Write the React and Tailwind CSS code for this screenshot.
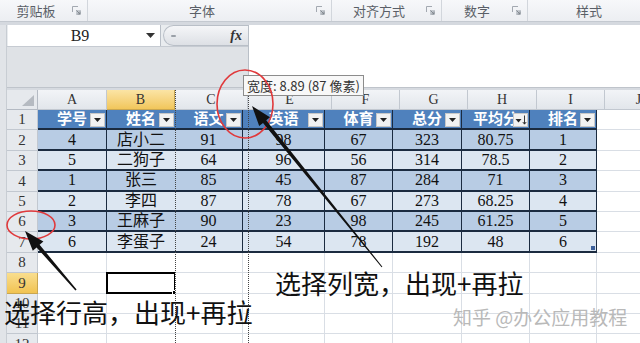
import React from "react";

const HEAD_COLS = [
  { key: "A", w: "w-[69px]" },
  { key: "B", w: "w-[68px]", on: true },
  { key: "C", w: "w-[73px]" },
  { key: "E", w: "w-[84px]" },
  { key: "F", w: "w-[68px]" },
  { key: "G", w: "w-[68px]" },
  { key: "H", w: "w-[69px]" },
  { key: "I", w: "w-[68px]" },
  { key: "J", w: "w-[68px]" },
];

// body columns sit a few px off the header row in the capture
const BODY_W = ["w-[69px]", "w-[68px]", "w-[68px]", "w-[82px]", "w-[68px]", "w-[69px]", "w-[68px]", "w-[67px]", "w-[68px]"];

const DATA = [
  ["学号", "姓名", "语文", "英语", "体育", "总分", "平均分", "排名"],
  ["4", "店小二", "91", "98", "67", "323", "80.75", "1"],
  ["5", "二狗子", "64", "96", "56", "314", "78.5", "2"],
  ["1", "张三", "85", "45", "87", "284", "71", "3"],
  ["2", "李四", "87", "78", "67", "273", "68.25", "4"],
  ["3", "王麻子", "90", "23", "98", "245", "61.25", "5"],
  ["6", "李蛋子", "24", "54", "78", "192", "48", "6"],
];

function Launcher() {
  return (
    <svg width="9" height="9" viewBox="0 0 9 9">
      <path d="M0.5 6V0.5H6" fill="none" stroke="#a3a9b1" />
      <rect x="4" y="4" width="5" height="5" fill="#c3c8ce" />
      <path d="M4.5 4.5L8 8M8 5.5V8H5.5" fill="none" stroke="#7d838b" strokeWidth="0.9" />
    </svg>
  );
}

function Group({ w, label, launcher }) {
  return (
    <div className={`${w} shrink-0 flex items-center border-r border-[#d2d6dc] pr-[6px]`}>
      <span className="flex-1 text-center">{label}</span>
      {launcher && <Launcher />}
    </div>
  );
}

function FilterBtn({ sorted }) {
  return (
    <span className="absolute right-[1px] top-[3px] w-[15px] h-[14px] bg-[#f2f2f2] border border-[#c8c8c8] flex items-center justify-center">
      {sorted ? (
        <svg width="12" height="10" viewBox="0 0 12 10">
          <path d="M0.5 4h6L3.5 7.5z" fill="#222" />
          <path d="M9.5 0.5V9M7.8 7l1.7 2.2L11.2 7" fill="none" stroke="#222" strokeWidth="0.9" />
        </svg>
      ) : (
        <svg width="7" height="4" viewBox="0 0 7 4">
          <path d="M0 0h7L3.5 4z" fill="#222" />
        </svg>
      )}
    </span>
  );
}

function Cell({ n, i, w }) {
  const inTable = n <= 7 && i < 8;
  const rightLine = i === 1 ? "" : "border-r";

  if (inTable && n === 1) {
    return (
      <div className={`${w} shrink-0 relative flex items-center justify-center bg-[#4f81bd] border-b-2 ${rightLine} border-[#1b2b40] text-white font-bold text-[15px]`}>
        <span>{DATA[0][i]}</span>
        <FilterBtn sorted={i === 6} />
      </div>
    );
  }

  if (inTable) {
    const band = n % 2 === 0 ? "bg-[#b8cce4]" : "bg-[#dce6f1]";
    return (
      <div className={`${w} shrink-0 relative flex items-center justify-center ${band} border-b-2 ${rightLine} border-[#1b2b40] text-[16px] text-[#111]`}>
        {DATA[n - 1][i]}
        {n === 7 && i === 7 && <span className="absolute right-[1px] bottom-[1px] w-[4px] h-[4px] bg-[#3c5f9a]" />}
      </div>
    );
  }

  return (
    <div className={`${w} shrink-0 relative border-b ${rightLine} border-[#d9dee5] bg-white`}>
      {n === 9 && i === 1 && (
        <>
          <span className="absolute -left-px -top-px -right-px -bottom-px border-2 border-black" />
          <span className="absolute -right-[3px] -bottom-[3px] w-[6px] h-[6px] bg-black border border-white" />
        </>
      )}
    </div>
  );
}

function RowHead({ n }) {
  const sel = n === 9;
  return (
    <div
      className={`w-[31px] shrink-0 flex items-center justify-center border-r border-b text-[15px] text-[#333] ${
        sel ? "bg-gradient-to-b from-[#f9de8e] to-[#f1c350] border-[#c9a650]" : "bg-[#e6e9ed] border-[#c2c8d0]"
      }`}
    >
      {n}
    </div>
  );
}

function App() {
  const rows = [1, 2, 3, 4, 5, 6, 7, 8, 9, 10, 11, 12];

  return (
    <div className="relative w-[640px] h-[343px] overflow-hidden bg-white font-['Noto_Sans_CJK_SC',sans-serif]">
      {/* Ribbon group labels */}
      <div className="flex h-[22px] bg-gradient-to-b from-[#f7f8fa] to-[#eceef2] border-b border-[#c4c9d0] text-[13px] text-[#5a5f67]">
        <Group w="w-[88px]" label="剪贴板" launcher />
        <Group w="w-[244px]" label="字体" launcher />
        <Group w="w-[110px]" label="对齐方式" launcher />
        <Group w="w-[86px]" label="数字" launcher />
        <div className="flex-1 flex items-center justify-center pl-[10px]">样式</div>
      </div>
      <div className="h-[3px] bg-[#d5d9df]" />

      <div className="flex">
        <div className="w-[7px] shrink-0 bg-[#e1e4e8] border-r border-[#c8cdd3]" />

        <div className="flex-1 flex flex-col min-w-0 font-['Liberation_Serif','Noto_Sans_CJK_SC',serif]">
          {/* Formula bar, expanded */}
          <div className="flex h-[62px] shrink-0">
            <div className="w-[241px] shrink-0 flex flex-col bg-[#dfe2e6]">
              <div className="flex h-[21px] items-center bg-[#e9ecef]">
                <div className="w-[153px] h-[21px] ml-px bg-white border-r border-[#b9bfc7] flex items-center">
                  <span className="flex-1 text-center text-[16px] text-[#222] pl-[6px]">B9</span>
                  <svg width="9" height="5" viewBox="0 0 9 5" className="mr-[5px]">
                    <path d="M0 0h9L4.5 5z" fill="#333" />
                  </svg>
                </div>
                <div className="flex-1 h-[21px] ml-[2px] rounded-l-full border border-r-0 border-[#b9bfc7] bg-gradient-to-b from-[#f5f6f8] to-[#dde0e5] flex items-center">
                  <span className="ml-[7px] w-[5px] h-[2px] bg-[#9aa0a8] rounded-full" />
                  <span className="ml-auto mr-[6px] text-[14px] italic font-bold text-[#333]">fx</span>
                </div>
              </div>
              <div className="flex-1 border-t border-[#c6cbd2]" />
            </div>
            <div className="flex-1 bg-white border-l border-[#b9bfc7]" />
          </div>
          <div className="h-[3px] shrink-0 bg-[#d6dae0] border-t border-[#bfc4cb]" />

          {/* Column headers */}
          <div className="flex h-[20px] shrink-0">
            <div className="w-[31px] shrink-0 bg-[#e6e9ed] border-r border-b border-[#b4bac3] flex items-end justify-end p-[3px]">
              <svg width="12" height="11" viewBox="0 0 12 11">
                <path d="M12 0V11H0z" fill="#b5bac1" />
              </svg>
            </div>
            {HEAD_COLS.map((c) => (
              <div
                key={c.key}
                className={`${c.w} shrink-0 flex items-center justify-center border-r border-b text-[14px] text-[#333] ${
                  c.on ? "bg-gradient-to-b from-[#fbe4a4] to-[#f1c65a] border-[#c9a650]" : "bg-gradient-to-b from-[#f2f4f7] to-[#e2e6eb] border-[#c2c8d0]"
                }`}
              >
                {c.key}
              </div>
            ))}
          </div>

          {/* Rows */}
          {rows.map((n) => (
            <div key={n} className="flex h-[20.4px] shrink-0">
              <RowHead n={n} />
              {BODY_W.map((w, i) => (
                <Cell key={i} n={n} i={i} w={w} />
              ))}
            </div>
          ))}
        </div>
      </div>

      {/* Column resize guides */}
      <div className="absolute left-[175px] top-[90px] bottom-0 border-l border-dotted border-[#444]" />
      <div className="absolute left-[248px] top-[90px] bottom-0 border-l border-dotted border-[#444]" />

      {/* Width tooltip */}
      <div className="absolute left-[243px] top-[75px] h-[21px] px-[3px] flex items-center bg-[#f8f8f8] border border-[#8c8c8c] text-[13px] text-[#333] whitespace-nowrap">
        宽度: 8.89 (87 像素)
      </div>

      {/* Annotations */}
      <svg className="absolute left-0 top-0 pointer-events-none" width="640" height="343" viewBox="0 0 640 343">
        <ellipse cx="245" cy="104" rx="28" ry="34" fill="none" stroke="#e0393b" strokeWidth="1.6" />
        <ellipse cx="31" cy="225" rx="24" ry="14" fill="none" stroke="#e0393b" strokeWidth="1.6" />
        <polygon
          points="252,106 270,117.2 266.2,120.3 382.4,266.7 381.6,267.3 263,122.9 259.2,126"
          fill="#111"
        />
        <polygon
          points="25,231 43.4,241.5 39.6,244.8 76.6,289.4 75.4,290.6 36.6,247.4 32.8,250.7"
          fill="#111"
        />
      </svg>

      <div className="absolute left-[275px] top-[270px] text-[26px] leading-none text-[#111] whitespace-nowrap">
        选择列宽，出现+再拉
      </div>
      <div className="absolute left-[4px] top-[299px] text-[26px] leading-none text-[#111] whitespace-nowrap">
        选择行高，出现+再拉
      </div>
      <div className="absolute left-[453px] top-[307px] text-[19px] leading-none text-[#b9b9b9] whitespace-nowrap">
        知乎 @办公应用教程
      </div>
    </div>
  );
}

export default App;
